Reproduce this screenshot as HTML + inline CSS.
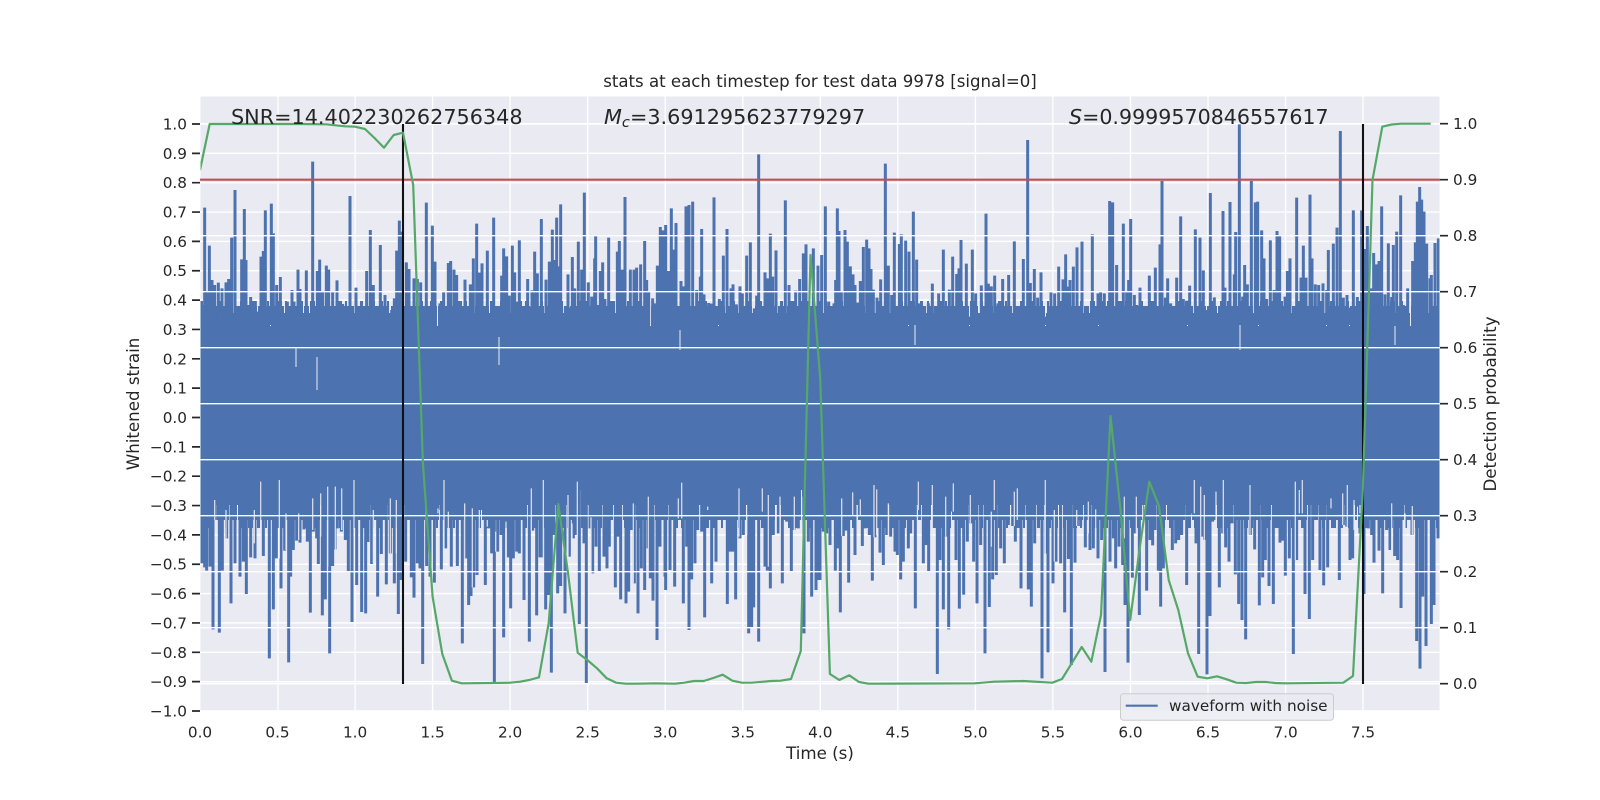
<!DOCTYPE html>
<html>
<head>
<meta charset="utf-8">
<title>stats</title>
<style>
html,body{margin:0;padding:0;background:#fff;width:1600px;height:800px;overflow:hidden}
svg{display:block}
text{font-family:"DejaVu Sans","Liberation Sans",sans-serif;fill:#262626}
.t{font-size:15.28px}
.m{text-anchor:middle}
.e{text-anchor:end}
.lab{font-size:16.67px;text-anchor:middle}
.ann{font-size:20.75px}
</style>
</head>
<body>
<svg width="1600" height="800" viewBox="0 0 1600 800" xmlns="http://www.w3.org/2000/svg">
<defs><clipPath id="c"><rect x="200.5" y="96.5" width="1239" height="614.5"/></clipPath></defs>
<rect x="200.5" y="96.5" width="1239" height="614.5" fill="#eaeaf2"/>
<g stroke="#fff" stroke-width="1.39" fill="none">
<path d="M200 124H1440M200 153.35H1440M200 182.7H1440M200 212.05H1440M200 241.4H1440M200 270.75H1440M200 300.1H1440M200 329.45H1440M200 358.8H1440M200 388.15H1440M200 417.5H1440M200 446.85H1440M200 476.2H1440M200 505.55H1440M200 534.9H1440M200 564.25H1440M200 593.6H1440M200 622.95H1440M200 652.3H1440M200 681.65H1440M200 711H1440"/>
<path d="M278 96V711M355.1 96V711M432.6 96V711M510.1 96V711M587.7 96V711M665.2 96V711M742.8 96V711M820.3 96V711M897.8 96V711M975.4 96V711M1052.9 96V711M1130.5 96V711M1208 96V711M1285.6 96V711M1363 96V711"/>
</g>
<g clip-path="url(#c)">
<rect x="200" y="326" width="1240" height="164" fill="#4c72b0"/>
<g fill="none" stroke="#4c72b0">
<path d="M200 326H1440" stroke-width="26" stroke-dasharray="9 1 14 1 6 1 11 2 17 1 7 1 4 1"/>
<path d="M200 320H1440" stroke-width="28" stroke-dasharray="5 1 7 2 3 1 10 1 2 3 6 1 8 2"/>
<path d="M200 318H1440" stroke-width="34" stroke-dasharray="3 4 2 9 4 3 2 13 3 7 5 5"/>
<path d="M200 490H1440" stroke-width="30" stroke-dasharray="8 1 12 1 5 1 15 2 9 1 6 1"/>
<path d="M200 498H1440" stroke-width="44" stroke-dasharray="4 1 6 2 3 1 9 1 2 3 5 1 7 2"/>
<path d="M200 500H1440" stroke-width="56" stroke-dasharray="3 5 2 8 4 3 2 12 3 6 5 4"/>
</g>
<g fill="none" stroke="#4c72b0" stroke-width="9">
<path transform="translate(200,125) scale(.33333)" d="M8 600V540M14 600V248M20 600V500M28 600V362M36 600V465M44 600V480M55 600V473M66 600V490M78 600V472M86 600V462M95 600V338M105 600V195M115 600V585M125 600V403M133 600V252M138 600V405M143 600V540M152 600V516M160 600V540M166 600V528M173 600V560M183 600V395M190 600V378M196 600V256M203 600V545M214 600V236M220 600V325M230 600V480M241 600V456M250 600V580M262 600V530M276 600V495M282 600V530M294 600V434M300 600V492M319 600V436M338 600V110M352 600V438M359 600V404M368 600V500M379 600V422M386 600V434M398 600V500M411 600V466M428 600V537M441 600V595M450 600V213M468 600V488M484 600V560M500 600V438M511 600V315M520 600V480M530 600V560M541 600V360M555 600V510M575 600V555M583 600V520M590 600V377M598 600V287M605 600V320M619 600V412M627 600V432M642 600V460M652 600V462M662 600V472M679 600V233M697 600V302M705 600V410M720 600V535M731 600V500M745 600V414M752 600V408M762 600V434M770 600V450M782 600V556M795 600V464M811 600V478M820 600V400M830 600V296M838 600V443M846 600V415M862 600V377M881 600V278M893 600V560M905 600V452M911 600V370M920 600V394M928 600V512"/>
<path transform="translate(510,125) scale(.33333)" d="M7 600V362M14 600V442M20 600V530M28 600V346M35 600V552M44 600V568M53 600V462M60 600V545M66 600V496M74 600V380M82 600V445M94 600V282M108 600V464M118 600V410M127 600V314M133 600V405M140 600V278M146 600V424M152 600V238M160 600V570M166 600V548M174 600V448M180 600V548M187 600V396M194 600V490M205 600V350M215 600V434M223 600V203M235 600V472M245 600V515M254 600V400M257 600V330M265 600V540M271 600V438M278 600V412M285 600V522M296 600V338M303 600V530M312 600V580M322 600V380M328 600V348M337 600V434M345 600V216M357 600V568M361 600V434M372 600V434M380 600V428M392 600V418M404 600V348M410 600V465M416 600V498M428 600V520M436 600V535M442 600V422M451 600V306M459 600V316M467 600V300M475 600V438M484 600V250M492 600V374M498 600V294M513 600V468M520 600V484M528 600V244M537 600V240M548 600V230M560 600V495M571 600V455M575 600V312M582 600V508M596 600V534M603 600V536M612 600V217M628 600V522M640 600V392M651 600V312M663 600V490M669 600V478M679 600V538M690 600V484M697 600V505M710 600V392M721 600V352M733 600V550M740 600V512M746 600V88M765 600V442M773 600V460M781 600V326M788 600V455M798 600V376M815 600V544M826 600V226M837 600V480M849 600V558M857 600V497M869 600V462M880 600V385M888 600V358M897 600V560M910 600V370M924 600V422"/>
<path transform="translate(820,125) scale(.33333)" d="M5 600V390M16 600V244M26 600V530M42 600V535M47 600V465M52 600V250M57 600V318M64 600V498M75 600V315M82 600V350M91 600V424M99 600V448M105 600V480M114 600V533M121 600V468M130 600V366M140 600V344M147 600V370M153 600V432M160 600V494M171 600V518M182 600V463M190 600V548M196 600V116M205 600V422M215 600V510M223 600V323M231 600V555M238 600V357M244 600V328M257 600V347M267 600V380M280 600V260M290 600V404M298 600V535M318 600V595M325 600V535M337 600V476M350 600V544M356 600V505M362 600V560M370 600V374M382 600V558M388 600V494M398 600V395M410 600V447M417 600V430M423 600V345M436 600V565M439 600V416M449 600V575M457 600V374M467 600V505M484 600V481M498 600V266M505 600V476M514 600V484M524 600V452M534 600V535M548 600V462M566 600V450M583 600V349M600 600V565M610 600V402M623 600V45M631 600V474M643 600V432M653 600V518M663 600V442M677 600V575M687 600V548M693 600V500M704 600V505M716 600V425M729 600V463M737 600V388M746 600V485M750 600V465M760 600V425M771 600V367M786 600V350M800 600V555M817 600V328M823 600V570M834 600V505M842 600V500M853 600V505M869 600V228M878 600V232M890 600V420M899 600V530M910 600V296M920 600V500M926 600V465"/>
<path transform="translate(1130,125) scale(.33333)" d="M2 600V282M13 600V510M20 600V540M30 600V488M44 600V555M58 600V452M66 600V528M76 600V428M90 600V358M96 600V168M106 600V518M113 600V460M122 600V535M140 600V458M152 600V274M160 600V522M170 600V527M179 600V482M190 600V565M196 600V313M210 600V338M220 600V436M228 600V555M241 600V204M253 600V517M270 600V572M279 600V258M285 600V488M300 600V231M313 600V448M317 600V321M328 600V-5M338 600V515M344 600V420M352 600V478M364 600V168M376 600V232M383 600V230M395 600V316M402 600V400M410 600V522M421 600V346M432 600V495M441 600V318M449 600V330M465 600V515M472 600V438M480 600V400M490 600V565M500 600V218M513 600V458M520 600V362M528 600V458M540 600V209M546 600V400M556 600V478M566 600V480M579 600V475M590 600V495M595 600V375M610 600V356M621 600V308M631 600V18M640 600V518M651 600V510M660 600V548M670 600V256M682 600V516M695 600V256M705 600V372M712 600V303M722 600V490M731 600V384M738 600V418M747 600V408M755 600V244M765 600V508M775 600V355M785 600V516M790 600V360M800 600V320M812 600V211M820 600V540M833 600V490M848 600V408M856 600V352M862 600V230M869 600V186M875 600V224M882 600V260M890 600V356M900 600V460M904 600V450M915 600V354M925 600V340"/>
<path transform="translate(200,480) scale(.33333)" d="M6 0V250M14 0V262M20 0V272M30 0V260M39 0V448M46 0V120M58 0V458M67 0V272M80 0V175M93 0V370M105 0V250M120 0V290M130 0V245M139 0V342M152 0V232M165 0V235M178 0V60M190 0V228M197 0V90M208 0V535M220 0V388M229 0V235M243 0V325M254 0V212M266 0V547M272 0V290M280 0V210M290 0V182M300 0V188M312 0V148M322 0V185M331 0V398M340 0V155M350 0V175M355 0V252M367 0V406M376 0V358M389 0V520M398 0V258M405 0V208M412 0V145M424 0V155M436 0V180M445 0V275M456 0V426M470 0V315M485 0V396M497 0V400M504 0V186M515 0V252M533 0V350M544 0V222M559 0V313M571 0V220M583 0V310M595 0V402M603 0V300M617 0V245M634 0V292M642 0V353M652 0V250M660 0V265M668 0V552M680 0V258M690 0V290M703 0V308M714 0V90M724 0V268M737 0V205M754 0V260M772 0V258M787 0V490M797 0V235M806 0V375M813 0V348M821 0V322M831 0V285M845 0V90M856 0V315M866 0V145M875 0V220M883 0V610M893 0V215M903 0V165M911 0V472M925 0V232"/>
<path transform="translate(510,480) scale(.33333)" d="M2 0V385M10 0V235M20 0V215M28 0V220M42 0V360M52 0V75M58 0V485M68 0V152M80 0V406M90 0V232M96 0V232M107 0V388M115 0V345M124 0V578M132 0V165M143 0V340M152 0V318M165 0V400M178 0V230M190 0V175M198 0V165M208 0V432M222 0V190M229 0V610M240 0V145M248 0V280M258 0V200M268 0V275M282 0V230M291 0V265M298 0V200M316 0V322M325 0V170M332 0V358M348 0V370M356 0V335M365 0V150M373 0V310M384 0V400M394 0V265M404 0V330M414 0V205M421 0V295M429 0V362M441 0V480M450 0V200M465 0V290M467 0V330M480 0V270M494 0V320M503 0V115M510 0V115M520 0V370M530 0V200M537 0V450M545 0V298M555 0V250M563 0V150M575 0V155M584 0V412M595 0V90M605 0V310M618 0V245M628 0V95M640 0V100M652 0V372M660 0V215M668 0V215M677 0V358M690 0V175M700 0V165M716 0V460M725 0V442M731 0V382M746 0V485M757 0V95M765 0V260M772 0V272M781 0V325M790 0V165M805 0V160M817 0V310M830 0V125M844 0V275M852 0V150M865 0V145M882 0V460M895 0V185M905 0V350M918 0V330M927 0V300"/>
<path transform="translate(820,480) scale(.33333)" d="M0 0V300M10 0V155M20 0V160M30 0V195M38 0V110M46 0V272M52 0V205M61 0V397M70 0V168M79 0V152M86 0V308M92 0V105M105 0V225M118 0V105M127 0V198M135 0V145M148 0V165M157 0V302M165 0V172M180 0V218M190 0V255M200 0V165M212 0V170M225 0V215M232 0V225M242 0V298M250 0V245M265 0V205M272 0V160M286 0V385M297 0V90M310 0V250M318 0V195M326 0V275M340 0V20M352 0V582M360 0V240M370 0V388M378 0V170M386 0V448M396 0V95M408 0V240M418 0V386M431 0V344M442 0V185M452 0V130M461 0V245M471 0V370M482 0V195M495 0V520M508 0V381M518 0V298M529 0V285M542 0V205M553 0V250M565 0V135M578 0V138M586 0V185M603 0V325M612 0V120M625 0V328M634 0V380M644 0V190M655 0V120M666 0V595M678 0V220M684 0V517M693 0V90M699 0V310M708 0V245M722 0V250M734 0V397M745 0V237M754 0V555M765 0V248M772 0V138M782 0V138M796 0V202M810 0V210M820 0V205M834 0V235M845 0V180M855 0V576M870 0V245M880 0V175M887 0V265M897 0V200M908 0V255M915 0V375M924 0V548"/>
<path transform="translate(1130,480) scale(.33333)" d="M7 0V293M15 0V160M28 0V405M40 0V70M50 0V332M60 0V180M68 0V196M75 0V150M85 0V272M92 0V380M100 0V265M114 0V58M127 0V210M137 0V190M146 0V180M155 0V165M170 0V315M180 0V110M188 0V100M198 0V190M206 0V522M215 0V170M224 0V180M231 0V583M240 0V408M248 0V125M258 0V40M268 0V322M278 0V160M287 0V202M297 0V245M306 0V130M316 0V283M326 0V372M336 0V420M347 0V478M361 0V165M374 0V208M388 0V376M398 0V292M406 0V240M417 0V318M430 0V372M440 0V70M450 0V188M457 0V182M466 0V287M478 0V235M490 0V522M500 0V240M510 0V100M525 0V342M538 0V417M548 0V240M560 0V100M570 0V270M581 0V316M593 0V262M603 0V85M612 0V115M628 0V300M640 0V135M650 0V140M660 0V240M668 0V235M680 0V80M690 0V160M702 0V342M715 0V145M725 0V165M732 0V248M747 0V212M758 0V340M770 0V150M780 0V210M794 0V228M803 0V240M813 0V384M828 0V100M846 0V165M860 0V483M870 0V566M878 0V350M888 0V498M904 0V432M912 0V375M924 0V175"/>
</g>
<g fill="none" stroke="#eaeaf2" stroke-width="4" stroke-opacity=".85">
<path transform="translate(200,480) scale(.33333)" d="M44 60V120M78 90V175M163 90V190M182 5V230M238 0V235M258 100V210M296 100V180M338 55V150M362 40V170M383 20V260M406 20V208M425 25V150M462 0V150M520 90V250M571 55V220M589 60V220M625 135V210M714 85V100M732 0V205M745 95V260M794 70V235M817 85V322M838 90V285M862 120V140M887 155V215M918 125V232"/>
<path transform="translate(510,480) scale(.33333)" d="M64 25V152M100 0V232M174 45V230M186 130V230M202 5V165M243 112V280M370 70V310M415 50V205M505 55V115M515 8V115M593 80V90M687 25V170M710 105V165M757 25V95M775 45V260M810 50V160M853 50V150M875 50V145"/>
<path transform="translate(820,480) scale(.33333)" d="M65 55V168M98 37V105M121 58V105M162 15V172M170 28V165M205 70V165M295 5V90M337 15V200M377 50V170M400 10V95M451 45V130M523 0V90M514 95V200M583 35V138M592 25V120M676 0V220M703 90V245M805 65V160M770 90V138M827 88V205M913 50V175"/>
<path transform="translate(1130,480) scale(.33333)" d="M19 50V160M38 75V130M193 0V100M212 20V170M223 45V180M258 35V125M280 0V160M360 15V165M496 5V240M508 30V100M517 0V100M603 55V85M638 40V135M652 15V140M672 60V150M690 75V100M785 70V210M825 100V165M847 78V165"/>
<path stroke-width="1.2" d="M296 347V367M317 357V390M499 337V365M680 330V350M915 325V345M1240 325V350M1395 326V345"/>
</g>
</g>
<g stroke="#fff" stroke-width="1.39" fill="none">
<path d="M200 123.7H1440M200 179.7H1440M200 235.7H1440M200 291.7H1440M200 347.7H1440M200 403.7H1440M200 459.7H1440M200 515.7H1440M200 571.7H1440M200 627.7H1440M200 683.7H1440"/>
</g>
<path d="M200 179.7H1440" stroke="#c44e52" stroke-width="2.08" fill="none"/>
<path d="M403 124V684M1363 124V684" stroke="#111" stroke-width="2.08" fill="none"/>
<path clip-path="url(#c)" fill="none" stroke="#55a868" stroke-width="2.2" stroke-linejoin="round" d="M200 170L209.7 124L300 124L326.7 124.3L345 126.3L355 126.7L365 129L374.5 138L384 147.7L393.7 135L403 132.7L413.2 185L422.9 463L432.6 596.7L442.3 654L451.9 680.7L461.7 683.3L510 682.7L520 681.7L529.3 680L539 677.3L548.7 623L558.3 504L568 573L577.7 652.7L587.3 660L597 668.3L606.7 678.3L616.3 682.7L626 683.7L636 683.7L655.3 683.3L674.7 683.7L684.3 682.7L694 681L703.7 681L713.3 678L722.7 674.7L732.3 680.7L742 682.7L751.7 682.7L771 681L780.7 680.7L791 679L800.8 651L810.5 255L820.2 378L829.9 674L839.3 680L849.3 675.3L859 682L868.7 683.7L975 683.3L994.3 681.7L1023.3 681L1052.3 682.7L1062 679L1071.7 663.3L1081.7 647L1091.3 661.7L1101 615L1110.5 416L1120.5 510L1130.2 620L1139.7 548L1149.3 481.7L1159 506L1168.7 580L1178.3 610L1188 653.3L1197.7 676.7L1207.3 678.3L1217 676.3L1226.7 679.3L1236.3 682.7L1246 683L1256 682L1265.7 682L1275.3 683L1285 683.3L1343.3 682.7L1353 676L1362.8 490L1372.5 180L1382.3 126.7L1391.7 124.5L1401 123.7L1430.7 123.7"/>
<g stroke="#262626" stroke-width="1.7" fill="none">
<path d="M192 124H200M192 153.35H200M192 182.7H200M192 212.05H200M192 241.4H200M192 270.75H200M192 300.1H200M192 329.45H200M192 358.8H200M192 388.15H200M192 417.5H200M192 446.85H200M192 476.2H200M192 505.55H200M192 534.9H200M192 564.25H200M192 593.6H200M192 622.95H200M192 652.3H200M192 681.65H200M192 711H200"/>
<path d="M1440 123.7H1448M1440 179.7H1448M1440 235.7H1448M1440 291.7H1448M1440 347.7H1448M1440 403.7H1448M1440 459.7H1448M1440 515.7H1448M1440 571.7H1448M1440 627.7H1448M1440 683.7H1448"/>
</g>
<text class="t e" x="187" y="129.5">1.0</text>
<text class="t e" x="187" y="158.8">0.9</text>
<text class="t e" x="187" y="188.2">0.8</text>
<text class="t e" x="187" y="217.5">0.7</text>
<text class="t e" x="187" y="246.9">0.6</text>
<text class="t e" x="187" y="276.2">0.5</text>
<text class="t e" x="187" y="305.6">0.4</text>
<text class="t e" x="187" y="334.9">0.3</text>
<text class="t e" x="187" y="364.3">0.2</text>
<text class="t e" x="187" y="393.6">0.1</text>
<text class="t e" x="187" y="423">0.0</text>
<text class="t e" x="187" y="452.3">−0.1</text>
<text class="t e" x="187" y="481.7">−0.2</text>
<text class="t e" x="187" y="511">−0.3</text>
<text class="t e" x="187" y="540.4">−0.4</text>
<text class="t e" x="187" y="569.7">−0.5</text>
<text class="t e" x="187" y="599.1">−0.6</text>
<text class="t e" x="187" y="628.4">−0.7</text>
<text class="t e" x="187" y="657.8">−0.8</text>
<text class="t e" x="187" y="687.1">−0.9</text>
<text class="t e" x="187" y="716.5">−1.0</text>
<text class="t" x="1453" y="129.2">1.0</text>
<text class="t" x="1453" y="185.2">0.9</text>
<text class="t" x="1453" y="241.2">0.8</text>
<text class="t" x="1453" y="297.2">0.7</text>
<text class="t" x="1453" y="353.2">0.6</text>
<text class="t" x="1453" y="409.2">0.5</text>
<text class="t" x="1453" y="465.2">0.4</text>
<text class="t" x="1453" y="521.2">0.3</text>
<text class="t" x="1453" y="577.2">0.2</text>
<text class="t" x="1453" y="633.2">0.1</text>
<text class="t" x="1453" y="689.2">0.0</text>
<text class="t m" x="200" y="737.5">0.0</text>
<text class="t m" x="277.5" y="737.5">0.5</text>
<text class="t m" x="355.1" y="737.5">1.0</text>
<text class="t m" x="432.6" y="737.5">1.5</text>
<text class="t m" x="510.1" y="737.5">2.0</text>
<text class="t m" x="587.7" y="737.5">2.5</text>
<text class="t m" x="665.2" y="737.5">3.0</text>
<text class="t m" x="742.8" y="737.5">3.5</text>
<text class="t m" x="820.3" y="737.5">4.0</text>
<text class="t m" x="897.8" y="737.5">4.5</text>
<text class="t m" x="975.4" y="737.5">5.0</text>
<text class="t m" x="1052.9" y="737.5">5.5</text>
<text class="t m" x="1130.5" y="737.5">6.0</text>
<text class="t m" x="1208" y="737.5">6.5</text>
<text class="t m" x="1285.6" y="737.5">7.0</text>
<text class="t m" x="1363" y="737.5">7.5</text>
<text class="lab" x="820" y="759">Time (s)</text>
<text class="lab" style="font-size:16.6px" x="820" y="87">stats at each timestep for test data 9978 [signal=0]</text>
<text class="lab" transform="translate(139,404) rotate(-90)">Whitened strain</text>
<text class="lab" transform="translate(1496,404) rotate(-90)">Detection probability</text>
<text class="ann" x="231" y="124">SNR=14.402230262756348</text>
<text class="ann" x="604" y="124"><tspan font-style="italic">M</tspan><tspan font-style="italic" font-size="14.6" dy="3">c</tspan><tspan dy="-3">=3.691295623779297</tspan></text>
<text class="ann" style="font-size:20.6px" x="1069" y="124"><tspan font-style="italic">S</tspan>=0.9999570846557617</text>
<rect x="1120.5" y="693.8" width="213" height="26.5" rx="3" ry="3" fill="#eaeaf2" fill-opacity=".8" stroke="#cccccc" stroke-width="1"/>
<path d="M1125.7 705.7H1157.7" stroke="#4c72b0" stroke-width="2.08" fill="none"/>
<text class="t" x="1169" y="711">waveform with noise</text>
</svg>
</body>
</html>
